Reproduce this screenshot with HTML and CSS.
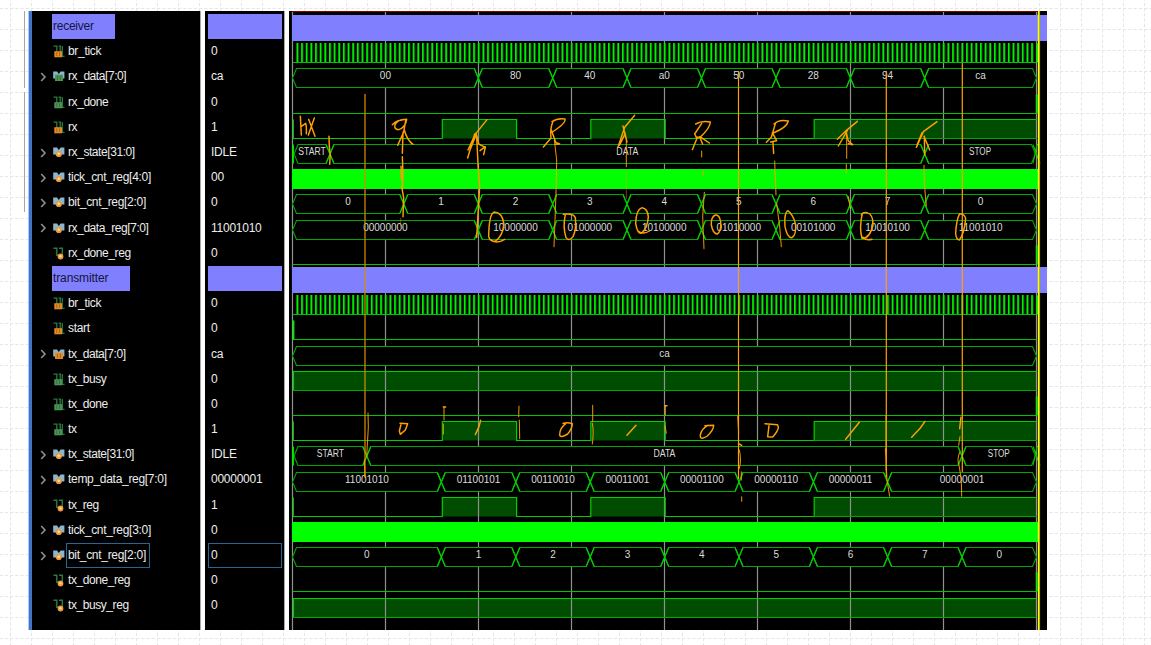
FILE: index.html
```html
<!DOCTYPE html>
<html lang="en">
<head>
<meta charset="utf-8">
<title>Waveform viewer</title>
<link rel="stylesheet" href="styles.css">
</head>
<body>
<svg class="paper" width="1151" height="645" aria-hidden="true">
  <defs>
    <pattern id="grid" width="21" height="21" patternUnits="userSpaceOnUse" x="10" y="8">
      <path class="grid-line" d="M.5 0V21M0 .5H21"/>
    </pattern>
  </defs>
  <rect width="1151" height="645" fill="url(#grid)"/>
  <path class="margin-rule" d="M24.5 11V88M24.5 92V212"/>
</svg>
<svg class="defs" width="0" height="0" aria-hidden="true">
  <defs>
    <symbol id="wire" viewBox="0 0 12 13">
      <path d="M.5 1.2H3.8V7M8 1.2H5.5M7.2 1V7M9.3 1V11.3H11.5" fill="none" stroke="#2f7a40" stroke-width="1.3"/>
    </symbol>
    <symbol id="bus" viewBox="0 0 12 13">
      <path d="M.2 1.5H4L5.8 4L7.6 1.5H11.4V8.6H.2Z" fill="#8db6cb"/>
    </symbol>
    <symbol id="i-in" viewBox="0 0 12 13"><use href="#wire"/><path d="M1.3 6.2H9V12.3H1.3Z" fill="#e28a24"/><path d="M3.7 7.2V11M6.5 7.2V11" stroke="#a85a10" stroke-width=".8"/></symbol>
    <symbol id="i-out" viewBox="0 0 12 13"><use href="#wire"/><path d="M1.3 6.2H9V12.3H1.3Z" fill="#4c9355"/><path d="M3.7 7.2V11M6.5 7.2V11" stroke="#2b6b37" stroke-width=".8"/></symbol>
    <symbol id="i-reg" viewBox="0 0 12 13"><path d="M.5 1.2H3.8V8.2H7.5M6 1.2H9.3V8" fill="none" stroke="#2f7a40" stroke-width="1.4"/><circle cx="7.5" cy="9.5" r="2.9" fill="#ee9a3b"/><circle cx="7.5" cy="9.3" r="1.2" fill="#ffd59a"/></symbol>
    <symbol id="i-busin" viewBox="0 0 12 13"><use href="#bus"/><path d="M2 4.6H10V11H2Z" fill="#e28a24"/><path d="M4.5 6V10M7.4 6V10" stroke="#a85a10" stroke-width=".8"/></symbol>
    <symbol id="i-busout" viewBox="0 0 12 13"><use href="#bus"/><path d="M2 4.6H10V11H2Z" fill="#4c9355"/><path d="M4.5 6V10M7.4 6V10" stroke="#2b6b37" stroke-width=".8"/></symbol>
    <symbol id="i-busreg" viewBox="0 0 12 13"><use href="#bus"/><circle cx="5.8" cy="8" r="3.1" fill="#ee9a3b"/><circle cx="5.8" cy="7.8" r="1.3" fill="#ffe0ae"/></symbol>
  </defs>
</svg>
<main class="viewer">
  <div class="names" id="names"></div>
  <div class="values" id="values"></div>
  <svg class="waves" viewBox="289 11 758 619" width="758" height="619">
    <g id="traces"></g>
    <g class="rules">
      <path class="rule-soft" d="M365 94V477"/>
      <path d="M738.5 71V479M886.3 71V477M962.3 63V472"/>
    </g>
    <g class="ink">
      <g transform="translate(285 5) scale(.33333)">
        <path d="M46 334L49 390M48 365L62 355Q65 365 64 386M71 343L90 394M88 339L70 390"/>
      </g>
      <g transform="translate(285 110) scale(.33333)">
        <path d="M132 79L133 110Q138 135 134 163"/>
        <path d="M322 44Q336 29 365 28Q362 52 341 59Q326 58 330 44Q338 30 352 30M362 32L356 66L338 106M358 60Q366 91 384 103M354 67L352 130M348 169L350 210M352 140L354 190L352 241M350 230L356 263L354 320"/>
        <path d="M606 29L570 74L549 120M569 72L548 144M573 69L581 102L601 112L596 134M601 110L585 122M573 75L553 125" />
        <path d="M575 80L580 180L584 230L575 382"/>
        <path class="faint" d="M347 325V348"/>
        <path d="M628 306Q612 310 611 380Q614 394 630 394Q653 379 657 343Q652 307 628 306M615 388Q633 404 659 388"/>
      </g>
      <g transform="translate(530 50) scale(.33333)">
        <path d="M68 217Q60 235 63 264L40 291M66 215Q82 204 105 207Q108 220 67 246M64 240L77 277L89 282L76 283"/>
        <path class="thin" d="M73 270L80 330L78 430L72 590"/>
        <path d="M314 196L284 232L278 250L264 291M279 228L291 276M286 250L268 286"/>
        <path class="thin" d="M289 270V350"/><path class="faint" d="M289 365V445"/>
        <path d="M497 222Q515 211 541 216Q540 235 510 262M515 220L494 252L501 265L487 299M498 262H513L538 279M509 260L518 283"/>
        <path class="thin" d="M515 303V321M519 362V376M523 427L518 500L522 596"/>
        <path d="M732 222Q747 207 775 213Q771 232 730 249M737 218L724 262L709 277M727 248L740 272L722 276M729 278L731 310"/>
        <path class="thin" d="M734 333L738 435M740 460L749 530L754 590"/>
        <path d="M106 493Q98 531 108 563Q118 576 129 560Q140 537 136 503Q129 488 100 493"/>
        <path d="M336 473Q318 479 317 520Q322 552 334 550Q353 535 355 500Q353 475 336 473M324 543Q341 555 358 543"/>
        <path d="M556 495Q543 500 544 525Q549 552 562 552Q574 545 572 515Q568 493 556 495"/>
      </g>
      <g transform="translate(780 50) scale(.33333)">
        <path d="M232 214L195 245L172 268M202 242L175 288M198 246L205 273L218 284L205 281"/>
        <path class="thin" d="M200 250V325M199 343V368"/>
        <path d="M471 215L430 245L409 292M426 248L411 285M432 259L449 300M433 259L434 315"/>
        <path class="thin" d="M432 346L433 400L439 468M205 440L211 475"/>
        <path d="M23 482Q12 490 15 530Q22 565 36 563Q49 555 47 523Q38 491 23 482"/>
        <path d="M247 491Q237 532 246 565Q270 565 279 525Q280 493 261 488Q247 486 244 495M249 562Q258 573 276 568"/>
        <path d="M539 491Q553 491 557 505Q553 551 538 570Q528 569 527 550Q529 510 539 491"/>
      </g>
      <g transform="translate(285 260) scale(.33333)">
        <path class="thin" d="M249 459L250 500L245 590M238 600L240 653M477 441V480M475 492V522M702 438L701 470M703 480L704 536"/>
        <path d="M345 490L368 491L361 510L346 523L343 513L348 493M475 441H482M587 481L582 500L571 524"/>
        <path d="M834 490Q847 486 862 491Q862 504 848 522Q826 535 824 525Q824 504 842 491"/>
      </g>
      <g transform="translate(570 380) scale(.33333)">
        <path class="thin" d="M68 76V125M67 130Q72 155 67 192M286 77V105M285 137L289 160M503 108L506 160M508 210Q515 240 508 265M514 275V300M515 350V364"/>
        <path d="M285 77H291M198 136L171 166M405 137L431 136Q431 150 412 168Q389 183 391 165Q395 145 414 136M585 131L622 134Q632 145 608 171L593 170L597 137M508 192L515 196"/>
      </g>
      <g transform="translate(810 380) scale(.33333)">
        <path d="M148 127L107 178M345 124L331 144L305 172M453 112L449 146"/>
        <path class="thin" d="M228 106V270M226 206L231 300L239 349M450 170L446 196M449 217Q440 240 447 255L454 300L455 349"/>
      </g>
    </g>
  </svg>
</main>
<script src="waves.js"></script>
</body>
</html>
```
FILE: styles.css
```css
html, body { margin: 0; height: 100%; overflow: hidden; }
body { background: #fff; font-family: "Liberation Sans", Arial, sans-serif; }
.paper { position: absolute; left: 0; top: 0; z-index: -1; }
.defs { position: absolute; }
.grid-line { stroke: #e6e6e6; stroke-width: 1; stroke-dasharray: 3.25 2; fill: none; }
.margin-rule { stroke: #a4a4a4; stroke-width: 1; }

.viewer {
  display: grid;
  grid-template-columns: 173px 4px 80px 4px 758px;
  width: 1019px;
  height: 619px;
  margin: 11px 0 0 28px;
  background: #fff;
}
.names, .values { box-sizing: border-box; background: #000; padding-top: 3px; height: 619px; border-right: 1px solid #a8a8a8; }
.names { grid-column: 1; border-left: 1px solid #a9c8f2; box-shadow: inset 3px 0 #4374c4; padding-left: 10px; }
.values { grid-column: 3; padding-left: 3px; }
.waves { grid-column: 5; display: block; background: #000; }

.row { display: flex; align-items: center; height: 25.2px; color: #ededed; font-size: 12px; letter-spacing: -.25px; white-space: pre; }
.arrow { width: 8px; height: 10px; margin-right: 6px; fill: none; stroke: #909090; stroke-width: 1.6; flex: none; }
.icon { width: 12px; height: 13px; flex: none; }
.label { height: 25px; line-height: 22px; box-sizing: border-box; border: 1px solid transparent; padding: 0 3px 0 1px; margin-left: 1px; letter-spacing: -.3px; }
.tight { letter-spacing: -.43px; }
.value { box-sizing: border-box; width: 74px; height: 25px; line-height: 22px; border: 1px solid transparent; padding-left: 2px; }
.selected { border-color: #2b6592; }
.group { background: #8080ff; color: #14143c; margin-left: 13px; height: 25px; line-height: 24px; box-sizing: border-box; padding-left: 1px; }
.group-receiver { width: 63px; }
.group-transmitter { width: 78px; letter-spacing: -.12px; }
.value-group { background: #8080ff; }

.band { fill: #8080ff; }
.grid-v { stroke: #909090; stroke-width: 1.2; fill: none; }
.top { stroke: #860000; stroke-width: 1; }
.low { stroke: #00c400; stroke-width: 1.1; fill: none; }
.high { fill: #004c00; }
.edge { stroke: #00d000; stroke-width: 1.2; fill: none; }
.tick { stroke: #00f000; stroke-width: 1.7; fill: none; }
.tick-shade { stroke: #005800; stroke-width: .9; fill: none; }
.solid { fill: #0f0; }
.cell { fill: #000; stroke: #00a800; stroke-width: 1.1; }
.bar { stroke: #00f000; stroke-width: 1.8; fill: none; }
.wave-text { fill: #dcdcdc; font-size: 10px; text-anchor: middle; }
.cursor { stroke: #ff0; stroke-width: 1.6; }
.cursor-shade { stroke: #8a8a20; stroke-width: 1; }
.rules { stroke: #ff9f0a; stroke-width: 1.2; fill: none; }
.rule-soft { stroke: #d88a00; stroke-opacity: .78; stroke-width: 1.6; }
.ink { fill: none; stroke: #ffa000; stroke-width: 4.4; stroke-linecap: round; stroke-linejoin: round; }
.thin { stroke-width: 3.2; stroke-opacity: .88; }
.faint { stroke-width: 2.5; stroke-opacity: .5; }
```
FILE: waves.js
```js
const START = 292.5, END = 1036.5;
const rxEdges = [478.3, 552.7, 627, 701.5, 776, 850.4, 924.7];
const txEdges = [441.3, 515.8, 590.2, 664.7, 739, 813.4, 887.6];
const pulses = [[442.3, 516.6], [590.8, 665.2], [814.2, 1037.2]];
const bits = s => s.split(" ");

// name, value, icon, trace kind, trace data
const rows = [
  ["receiver", "", "", "band"],
  ["br_tick", "0", "in", "clock"],
  ["rx_data[7:0]", "ca", "busout", "bus", rxEdges, bits("00 80 40 a0 50 28 94 ca")],
  ["rx_done", "0", "out", "done"],
  ["rx", "1", "in", "pulse"],
  ["rx_state[31:0]", "IDLE", "busreg", "state", [330, 924.7], bits("START DATA STOP")],
  ["tick_cnt_reg[4:0]", "00", "busreg", "solid"],
  ["bit_cnt_reg[2:0]", "0", "busreg", "bus", [403.8, ...rxEdges], bits("0 1 2 3 4 5 6 7 0")],
  ["rx_data_reg[7:0]", "11001010", "busreg", "bus", rxEdges, bits("00000000 10000000 01000000 10100000 01010000 00101000 10010100 11001010")],
  ["rx_done_reg", "0", "reg", "done"],
  ["transmitter", "", "", "band"],
  ["br_tick", "0", "in", "clock"],
  ["start", "0", "in", "start"],
  ["tx_data[7:0]", "ca", "busin", "bus", [], ["ca"]],
  ["tx_busy", "0", "out", "busy"],
  ["tx_done", "0", "out", "done"],
  ["tx", "1", "out", "pulse"],
  ["tx_state[31:0]", "IDLE", "busreg", "state", [366.8, 962], bits("START DATA STOP")],
  ["temp_data_reg[7:0]", "00000001", "busreg", "bus", txEdges, bits("11001010 01100101 00110010 00011001 00001100 00000110 00000011 00000001")],
  ["tx_reg", "1", "reg", "pulse"],
  ["tick_cnt_reg[3:0]", "0", "busreg", "solid"],
  ["bit_cnt_reg[2:0]", "0", "busreg", "bus", [...txEdges, 962], bits("0 1 2 3 4 5 6 7 0"), true],
  ["tx_done_reg", "0", "reg", "done"],
  ["tx_busy_reg", "0", "reg", "busy"]
];

let names = "", values = "", back = "", front = "";
const line = (cls, d) => `<path class="${cls}" d="${d}"/>`;

rows.forEach(([name, value, icon, kind, edges, labels, selected], i) => {
  const sel = selected ? " selected" : "";
  if (kind === "band") {
    names += `<div class="row"><span class="group group-${name}">${name}</span></div>`;
    values += `<div class="row"><span class="value value-group"></span></div>`;
    back += `<rect class="band" x="292" y="${15 + i * 25.2}" width="755" height="26"/>`;
    return;
  }
  const arrow = name.includes("[") ? '<path d="M2.2 1L6 5L2.2 9"/>' : "";
  const tight = /^[rt]x/.test(name) ? " tight" : "";
  names += `<div class="row"><svg class="arrow" viewBox="0 0 8 10">${arrow}</svg><svg class="icon"><use href="#i-${icon}"/></svg><span class="label${tight}${sel}">${name}</span></div>`;
  values += `<div class="row"><span class="value${sel}">${value}</span></div>`;

  const hi = Math.floor(43.7 + 25.2 * (i - 1)) + .5, lo = hi + 19;
  if (kind === "clock") {
    let d = "", s = "";
    for (let x = 297.3; x < 1036; x += 4.65) {
      d += `M${x.toFixed(2)} ${hi - .5}V${lo}`;
      s += `M${(x + 1.2).toFixed(2)} ${hi - .5}V${lo}`;
    }
    front += line("tick-shade", s) + line("tick", d) + line("low", `M${START} ${lo}H1037`) + line("bar", `M1037 ${hi}V${lo}`);
  } else if (kind === "done") {
    front += line("low", `M${START} ${lo}H1037`) + line("bar", `M1036.7 ${hi}V${lo}`);
  } else if (kind === "start") {
    front += line("low", `M${START} ${lo}H1037`) + line("bar", `M293.5 ${hi}V${lo}`);
  } else if (kind === "solid") {
    front += `<rect class="solid" x="292" y="${hi - .5}" width="746" height="20"/>`;
  } else if (kind === "busy") {
    back += `<rect class="high" x="293" y="${hi}" width="744" height="19"/>`;
    front += line("edge", `M293.5 ${lo}V${hi}H1036.5`) + `<path class="cell" fill-opacity="0" d="M293.5 ${lo}H1036.5"/>`;
  } else if (kind === "pulse") {
    let d = `M293.3 ${hi}V${lo}`;
    pulses.forEach(([a, b]) => {
      back += `<rect class="high" x="${a}" y="${hi}" width="${b - a}" height="19"/>`;
      d += `H${a}V${hi}H${b}` + (b < 1036 ? `V${lo}` : "");
    });
    front += line("edge", d) + line("cell", `M814 ${lo}H1037`);
  } else {
    const first = kind === "state" ? 294 : START;
    const pts = [first, ...edges, kind === "state" ? 1035.5 : END];
    const mid = (hi + lo) / 2;
    for (let k = 0; k < labels.length; k++) {
      const a = pts[k], b = pts[k + 1];
      front += line("cell", `M${a} ${mid}L${a + 4} ${hi}H${b - 4}L${b} ${mid}L${b - 4} ${lo}H${a + 4}Z`);
      if (k > 0) front += line("edge", `M${a - 4} ${hi}L${a + 4} ${lo}M${a - 4} ${lo}L${a + 4} ${hi}`);
    }
    if (kind === "state") front += line("bar", `M293 ${hi}V${lo}`) + line("low", `M1033 ${hi}L1040 ${lo}M1033 ${lo}L1037 ${hi}H1040`);
    labels.forEach((t, k) => {
      const len = t === "START" ? 27.5 : /^[DS]/.test(t) ? 22 : 0;
      const fit = len ? ` textLength="${len}" lengthAdjust="spacingAndGlyphs"` : "";
      front += `<text class="wave-text"${fit} x="${(pts[k] + pts[k + 1]) / 2}" y="${hi + 10.5}">${t}</text>`;
    });
  }
});

let grid = "";
for (let x = 292.5; x < 1037; x += 93) grid += `M${x} 12V630`;
const bands = back.match(/<rect class="band".*?\/>/g).join("");
const highs = back.replace(/<rect class="band".*?\/>/g, "");
document.getElementById("names").innerHTML = names;
document.getElementById("values").innerHTML = values;
document.getElementById("traces").innerHTML =
  line("top", "M292 11.5H1037") + highs + line("grid-v", grid) + bands + front +
  line("cursor-shade", "M1039.6 11V630") + line("cursor", "M1038.6 11V630");
```
